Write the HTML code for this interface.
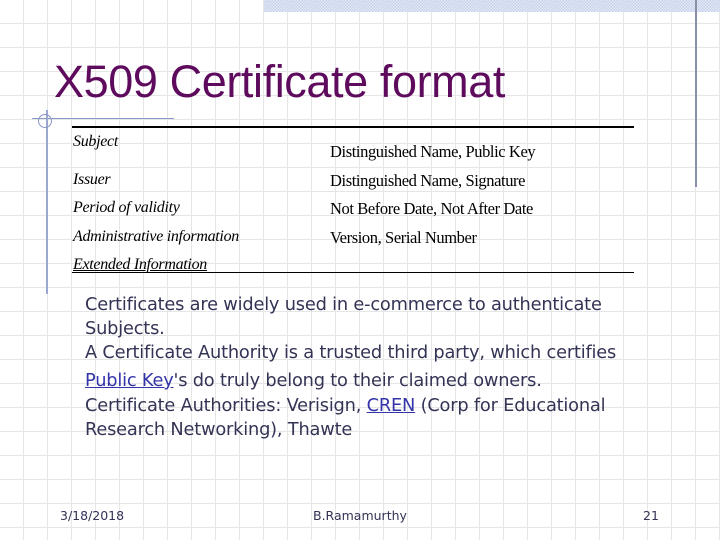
<!DOCTYPE html>
<html><head><meta charset="utf-8"><style>
body{margin:0;width:720px;height:540px;overflow:hidden;position:relative;background:#fff;
background-image:repeating-linear-gradient(to right,transparent 0 23px,#e6e6e6 23px 24px),repeating-linear-gradient(to bottom,transparent 0 23px,#e6e6e6 23px 24px);}
.a{position:absolute;white-space:nowrap}
.t{font-family:"Liberation Serif",serif;font-style:italic;font-size:16px;color:#000;letter-spacing:-0.3px}
.r{font-family:"Liberation Serif",serif;font-size:16.5px;color:#000;letter-spacing:-0.4px}
.b{font-family:"DejaVu Sans",sans-serif;font-size:17.8px;color:#333355;left:85px;letter-spacing:-0.2px}
.b u{color:#3333aa}
.f{font-family:"DejaVu Sans",sans-serif;font-size:12.5px;color:#333355;top:508px}
</style></head><body>
<div class="a" style="left:264px;top:0;width:456px;height:12px;background:repeating-conic-gradient(#c4d0ea 0 25%,#e6ecf8 0 50%) 0 0/3px 3px"></div>
<div class="a" style="left:695px;top:0;width:2px;height:187px;background:#8890a8"></div>
<div class="a" style="left:32px;top:118px;width:142px;height:1px;background:#8898c8"></div>
<div class="a" style="left:46px;top:110px;width:2px;height:184px;background:#9aa8d0"></div>
<div class="a" style="left:38px;top:114px;width:12px;height:12px;border:1px solid #8898c8;border-radius:50%"></div>
<div class="a" style="left:54px;top:56px;font-family:'Liberation Sans',sans-serif;font-size:45px;color:#5e0b5e;letter-spacing:-0.4px">X509 Certificate format</div>
<div class="a" style="left:72px;top:126px;width:562px;height:2px;background:#000"></div>
<div class="a" style="left:72px;top:272px;width:562px;height:1px;background:#000"></div>
<div class="a t" style="left:73px;top:133px">Subject</div>
<div class="a t" style="left:73px;top:171px">Issuer</div>
<div class="a t" style="left:73px;top:199px">Period of validity</div>
<div class="a t" style="left:73px;top:228px">Administrative information</div>
<div class="a t" style="left:73px;top:256px;text-decoration:underline">Extended Information</div>
<div class="a r" style="left:330px;top:142px">Distinguished Name, Public Key</div>
<div class="a r" style="left:330px;top:171px">Distinguished Name, Signature</div>
<div class="a r" style="left:330px;top:199px">Not Before Date, Not After Date</div>
<div class="a r" style="left:330px;top:228px">Version, Serial Number</div>
<div class="a b" style="top:294px">Certificates are widely used in e-commerce to authenticate</div>
<div class="a b" style="top:318px">Subjects.</div>
<div class="a b" style="top:342px">A Certificate Authority is a trusted third party, which certifies</div>
<div class="a b" style="top:370px"><u>Public Key</u>'s do truly belong to their claimed owners.</div>
<div class="a b" style="top:395px">Certificate Authorities: Verisign, <u>CREN</u> (Corp for Educational</div>
<div class="a b" style="top:419px">Research Networking), Thawte</div>
<div class="a f" style="left:60px">3/18/2018</div>
<div class="a f" style="left:313px">B.Ramamurthy</div>
<div class="a f" style="left:643px">21</div>
</body></html>
